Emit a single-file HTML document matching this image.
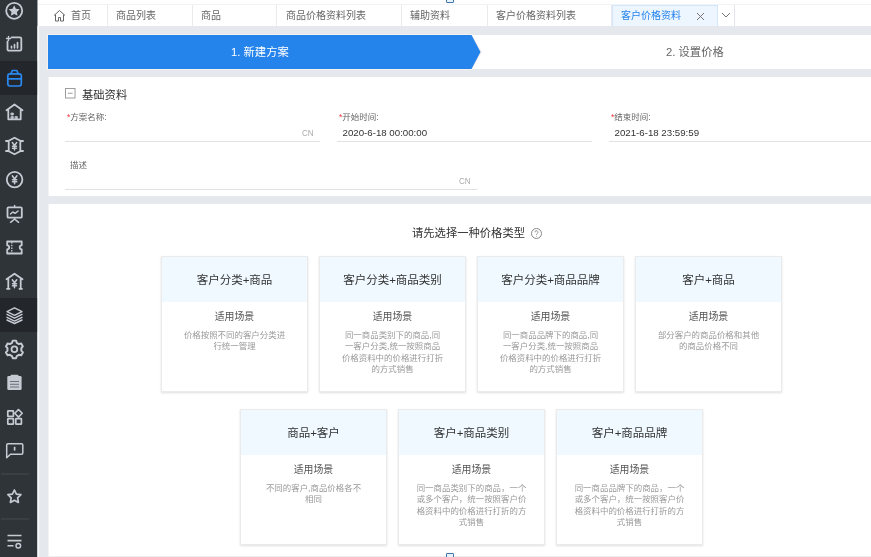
<!DOCTYPE html>
<html lang="zh-CN">
<head>
<meta charset="utf-8">
<title>客户价格资料</title>
<style>
*{box-sizing:border-box;margin:0;padding:0}
html,body{width:871px;height:557px;overflow:hidden;background:#e5e9ee;font-family:"Liberation Sans","Noto Sans CJK SC",sans-serif;color:#333}
body{position:relative}
.abs{position:absolute}
#side{left:0;top:0;width:38px;height:557px}
#side .act{left:0;top:61px;width:38px;height:34px;background:#24292e}
#side .act2{left:0;top:298px;width:38px;height:34px;background:#24292e}
#side svg{position:absolute;left:0;top:0}
#side .dv{position:absolute;left:2px;width:26px;height:1px;background:#454b52}
#tabs{left:38px;top:0;width:840px;height:26px;background:#fff;box-shadow:0 -4px 0 #fff}
#tabs .line{left:0;top:3.700px;width:840px;height:1.500px;background:#f2f3f5}
.tab{position:absolute;top:5px;height:21px;line-height:21px;font-size:10px;color:#666;border-right:1px solid #e8eaed;white-space:nowrap}
.tab span{position:absolute;top:0}
#steps{left:48px;top:35px;width:830px;height:34px;background:#fff}
#steps .blue{left:0;top:0;width:433px;height:34px;background:#2583ec;clip-path:polygon(0 0,423.500px 0,432.500px 17px,423.500px 34px,0 34px)}
#steps .t{position:absolute;top:0;height:34px;line-height:35px;font-size:11.3px;white-space:nowrap}
.panel{background:linear-gradient(90deg,#f1f3f6 0,#f1f3f6 1px,#fff 1px)}
.lbl{position:absolute;font-size:8.5px;color:#666;white-space:nowrap;line-height:11px}
.lbl i{color:#f33;font-style:normal}
.val{position:absolute;font-size:9.7px;color:#333;white-space:nowrap}
.ul{position:absolute;height:1px;background:#e0e1e3}
.cn{position:absolute;font-size:9.5px;color:#aaa;transform:scaleX(.85);transform-origin:0 0}
.card{position:absolute;width:147px;height:136px;background:#fff;border:1px solid #ebebeb;box-shadow:0 1px 2px rgba(0,0,0,.13)}
.card .h{height:45px;line-height:46.5px;background:#eff9ff;text-align:center;font-size:11.5px;color:#333;white-space:nowrap}
.card .s{margin-top:8px;text-align:center;font-size:9.9px;color:#555;line-height:13px}
.card .d{margin:7px 0 0;text-align:center;font-size:8.45px;color:#999;line-height:11.3px;white-space:nowrap}
#tabs,#steps,.panel{filter:blur(.45px)}
#side svg{filter:blur(.45px);overflow:visible}
</style>
</head>
<body>
<div id="side" class="abs">
<svg width="40" height="557" viewBox="0 0 40 557" fill="none" stroke="#c6cad3" stroke-width="1.8" stroke-linecap="round" stroke-linejoin="round">
<rect x="-5" y="-5" width="42.400" height="567" fill="#2f3439" stroke="none"/>
<rect x="-5" y="61" width="42.400" height="34" fill="#23272b" stroke="none"/>
<rect x="-5" y="298" width="42.400" height="34" fill="#23272b" stroke="none"/>
<rect x="37.400" y="26" width="1.800" height="531" fill="#f6f8fa" stroke="none"/>
<rect x="1" y="473.500" width="28" height="1" fill="#454a50" stroke="none"/>
<rect x="1" y="518.500" width="28" height="1" fill="#454a50" stroke="none"/>
<!-- 1 star in circle -->
<circle cx="14.200" cy="10.800" r="8" stroke-width="1.800"/>
<path transform="translate(14.200 10.800) scale(1.12) translate(-14.200 -11.300)" d="M14.200 6.300l1.500 3.100 3.400.5-2.500 2.400.6 3.400-3-1.600-3 1.600.6-3.400-2.500-2.400 3.400-.5z" fill="#c6cad3" stroke="none"/>
<!-- 2 chart -->
<path d="M11.500 37.300h8.300a1.500 1.500 0 0 1 1.500 1.500v10.400a1.500 1.500 0 0 1-1.500 1.500H9a1.500 1.500 0 0 1-1.500-1.500v-7.700"/>
<path d="M8.500 36.500v4M6.500 38.500h4" stroke-width="1.400"/>
<path d="M11.500 47.800v-1.500M14.500 47.800v-3.200M17.500 47.800v-5.200" stroke-width="1.700"/>
<!-- 3 bag -->
<g stroke="#2a89f0" stroke-width="1.700">
<rect x="7.800" y="73.800" width="13.500" height="12.200" rx="2.200"/>
<path d="M10.800 73.800l1.500-3.300h4.500l1.500 3.300M7.800 78.800h13.500"/>
</g>
<!-- 4 house boxes -->
<path d="M6.500 110.200l8-5.700 8 5.700M8.300 109.500v9.800h12.400v-9.800"/>
<path d="M11.300 113h2v2h-2zM11.300 116.600h2v2h-2zM15.300 116.600h2v2h-2z" fill="#c6cad3" stroke-width=".8"/>
<!-- 5 hexagon yen -->
<path d="M14.500 137.700l5.800 3v10.500l-5.800 3-5.800-3v-10.500zM6 141h3M6 151h3M20 141h3M20 151h3"/>
<path d="M12.300 142.500l2.200 3 2.200-3M14.500 145.500v4.500M12.500 146.300h4M12.500 148.200h4" stroke-width="1.500"/>
<!-- 6 circle yen -->
<circle cx="14.600" cy="179.600" r="7.800"/>
<path d="M12.300 175.800l2.300 3.200 2.300-3.200M14.600 179v4.800M12.500 179.800h4.200M12.500 181.800h4.200" stroke-width="1.500"/>
<!-- 7 board -->
<rect x="7.500" y="207.300" width="14.300" height="10.400" rx="1"/>
<path d="M14.600 205.500v1.500M14.600 218v1l-4 3.300M14.600 219l4 3.300M10.500 214l2.300-2 2.300 1.300 3-2.300" stroke-width="1.500"/>
<!-- 8 ticket -->
<path d="M7.200 241.500h14.500v3.800a2 2 0 0 0 0 4v4.200H7.200v-4.200a2 2 0 0 0 0-4z"/>
<path d="M11.800 242v11" stroke-width="1.300" stroke-dasharray="1.500 1.200" stroke-linecap="butt"/>
<!-- 9 house yen -->
<path d="M6.500 279.200l8-5.500 8 5.500M8.300 279v9.800M20.700 279v9.800M7 288.800h2.500M19.500 288.800H22"/>
<path d="M12.300 279.800l2.200 3 2.200-3M14.500 282.800v5M12.500 283.800h4M12.500 285.800h4" stroke-width="1.500"/>
<!-- 10 layers -->
<path d="M14.500 307.800l7.500 3.800-7.500 3.800-7.500-3.800zM7 314.300l7.500 3.800 7.500-3.800M7 317.300l7.500 3.800 7.500-3.800M7 320l7.500 3.500 7.500-3.500" stroke-width="1.400"/>
<!-- 11 gear -->
<circle cx="14.400" cy="349.200" r="2.900"/>
<path transform="translate(14.400 349.200) scale(1.1) translate(-14.400 -349.200)" d="M12.900 341.400h3l.7 2 1.900 1.100 2.100-.4 1.500 2.600-1.400 1.600v2.200l1.400 1.600-1.500 2.600-2.100-.4-1.900 1.100-.7 2h-3l-.7-2-1.900-1.100-2.100.4-1.500-2.600 1.400-1.600v-2.200l-1.400-1.600 1.500-2.600 2.100.4 1.900-1.100z"/>
<!-- 12 clipboard -->
<rect x="7.300" y="376" width="14.300" height="14" rx="1.300" fill="#c6cad3" stroke="none"/>
<rect x="10.500" y="374.700" width="8" height="3" rx="1" fill="#c6cad3" stroke="none"/>
<path d="M10 381.500h9M10 384.300h9M10 387h9" stroke="#6d727b" stroke-width="1" stroke-linecap="butt"/>
<!-- 13 grid -->
<rect x="7.800" y="410.800" width="5.600" height="5.600" rx=".5" stroke-width="1.700"/>
<rect x="7.800" y="418.600" width="5.600" height="5.600" rx=".5" stroke-width="1.700"/>
<rect x="15.800" y="418.600" width="5.600" height="5.600" rx=".5" stroke-width="1.700"/>
<path d="M18.500 409.500l3.700 3.800-3.700 3.800-3.700-3.800z" stroke-width="1.600"/>
<!-- 14 chat -->
<path d="M8 443.700h13.500a1.300 1.300 0 0 1 1.300 1.300v8a1.300 1.300 0 0 1-1.300 1.300H10.500l-3.800 3.500V445a1.300 1.300 0 0 1 1.300-1.300z" stroke-width="1.500"/>
<path d="M14.600 446.800v3.800" stroke-width="1.700" stroke-linecap="butt"/>
<!-- 15 star -->
<path d="M14.400 490l2 4.100 4.500.6-3.300 3.200.8 4.500-4-2.100-4 2.100.8-4.500-3.300-3.200 4.500-.6z" stroke-width="1.700"/>
<!-- 16 list -->
<path d="M7.500 535.500h14M7.500 540.600h14M7.500 545.800h6" stroke-width="1.600" stroke-linecap="butt"/>
<circle cx="18.300" cy="545.800" r="2.300" stroke-width="1.500"/>
</svg>
</div>

<div id="tabs" class="abs">
  <div class="line abs"></div>
  <div class="tab" style="left:0;width:70px"><svg style="position:absolute;left:15px;top:4px" width="13" height="13" viewBox="0 0 13 13" fill="none" stroke="#666" stroke-width="1"><path d="M1 6.500L6.500 1.500 12 6.500M2.500 5.500V12h3V8.500h2V12h3V5.500"/></svg><span style="left:33px">首页</span></div>
  <div class="tab" style="left:70px;width:85px"><span style="left:8px">商品列表</span></div>
  <div class="tab" style="left:155px;width:84px"><span style="left:8px">商品</span></div>
  <div class="tab" style="left:239px;width:125px"><span style="left:9px">商品价格资料列表</span></div>
  <div class="tab" style="left:364px;width:86px"><span style="left:8px">辅助资料</span></div>
  <div class="tab" style="left:450px;width:124px"><span style="left:8px">客户价格资料列表</span></div>
  <div class="tab" style="left:574px;width:106px;background:#edf6ff;color:#2583ec;border:1px solid #d3e6fb;border-bottom:0;line-height:19px"><span style="left:8px">客户价格资料</span><svg style="position:absolute;left:83px;top:6px" width="9" height="9" viewBox="0 0 9 9" stroke="#777" stroke-width="1" fill="none"><path d="M1 1l7 7M8 1L1 8"/></svg></div>
  <div class="tab" style="left:680px;width:17px;border-right:1px solid #e2e5e9"><svg style="position:absolute;left:3px;top:7px" width="10" height="7" viewBox="0 0 10 7" stroke="#777" stroke-width="1" fill="none"><path d="M1 1l4 4 4-4"/></svg></div>
</div>

<div id="steps" class="abs">
  <div class="abs" style="left:-1px;top:-1px;width:436px;height:36px;background:#f4f1ee;clip-path:polygon(0 0,425px 0,435px 18px,425px 36px,0 36px)"></div>
  <div class="blue abs"></div>
  <div class="t" style="left:183px;color:#fff">1. 新建方案</div>
  <div class="t" style="left:618px;color:#666">2. 设置价格</div>
</div>

<div class="panel abs" style="left:48px;top:77px;width:830px;height:119px">
  <svg class="abs" style="left:17px;top:11px" width="10.5" height="10.5" viewBox="0 0 11 11" fill="none" stroke="#999" stroke-width="1"><rect x=".5" y=".5" width="10" height="10"/><path d="M3 5.500h5"/></svg>
  <div class="abs" style="left:34px;top:10.5px;font-size:11.3px;line-height:15px;color:#333">基础资料</div>
  <div class="lbl" style="left:19px;top:35px"><i>*</i>方案名称:</div>
  <div class="cn" style="left:254px;top:49.500px">CN</div>
  <div class="ul" style="left:17px;top:64px;width:255px"></div>
  <div class="lbl" style="left:291px;top:35px"><i>*</i>开始时间:</div>
  <div class="val" style="left:294.5px;top:50px">2020-6-18 00:00:00</div>
  <div class="ul" style="left:289px;top:64px;width:255px"></div>
  <div class="lbl" style="left:563px;top:35px"><i>*</i>结束时间:</div>
  <div class="val" style="left:566.5px;top:50px">2021-6-18 23:59:59</div>
  <div class="ul" style="left:561px;top:64px;width:262px"></div>
  <div class="lbl" style="left:22px;top:83px">描述</div>
  <div class="cn" style="left:411px;top:98px">CN</div>
  <div class="ul" style="left:17px;top:111.600px;width:412px"></div>
</div>

<div class="panel abs" style="left:48px;top:204px;width:830px;height:353px;border-bottom:1px solid #efefef">
  <div class="abs" style="left:364px;top:22px;font-size:11.3px;line-height:15px;color:#333;white-space:nowrap">请先选择一种价格类型</div>
  <svg class="abs" style="left:483px;top:24px" width="11" height="11" viewBox="0 0 11 11" fill="none" stroke="#888" stroke-width="1"><circle cx="5.500" cy="5.500" r="5"/><path d="M4 4.300a1.500 1.500 0 1 1 2.300 1.200c-.5.400-.8.600-.8 1.300M5.500 8.200v.6" stroke-width=".9"/></svg>

  <div class="card" style="left:113px;top:52px"><div class="h">客户分类+商品</div><div class="s">适用场景</div><div class="d">价格按照不同的客户分类进<br>行统一管理</div></div>
  <div class="card" style="left:271px;top:52px"><div class="h">客户分类+商品类别</div><div class="s">适用场景</div><div class="d">同一商品类别下的商品,同<br>一客户分类,统一按照商品<br>价格资料中的价格进行打折<br>的方式销售</div></div>
  <div class="card" style="left:429px;top:52px"><div class="h">客户分类+商品品牌</div><div class="s">适用场景</div><div class="d">同一商品品牌下的商品,同<br>一客户分类,统一按照商品<br>价格资料中的价格进行打折<br>的方式销售</div></div>
  <div class="card" style="left:587px;top:52px"><div class="h">客户+商品</div><div class="s">适用场景</div><div class="d">部分客户的商品价格和其他<br>的商品价格不同</div></div>

  <div class="card" style="left:192px;top:205px"><div class="h">商品+客户</div><div class="s">适用场景</div><div class="d">不同的客户,商品价格各不<br>相同</div></div>
  <div class="card" style="left:350px;top:205px"><div class="h">客户+商品类别</div><div class="s">适用场景</div><div class="d">同一商品类别下的商品，一个<br>或多个客户，统一按照客户价<br>格资料中的价格进行打折的方<br>式销售</div></div>
  <div class="card" style="left:508px;top:205px"><div class="h">客户+商品品牌</div><div class="s">适用场景</div><div class="d">同一商品品牌下的商品，一个<br>或多个客户，统一按照客户价<br>格资料中的价格进行打折的方<br>式销售</div></div>
</div>
<div class="abs" style="left:446px;top:-2px;width:8px;height:5px;border:1px solid #3f74ad;border-radius:1px;background:#e6f3fb"></div>
<div class="abs" style="left:446px;top:553px;width:8px;height:6px;border:1px solid #3f74ad;border-radius:1px;background:#e6f3fb"></div>
</body>
</html>
